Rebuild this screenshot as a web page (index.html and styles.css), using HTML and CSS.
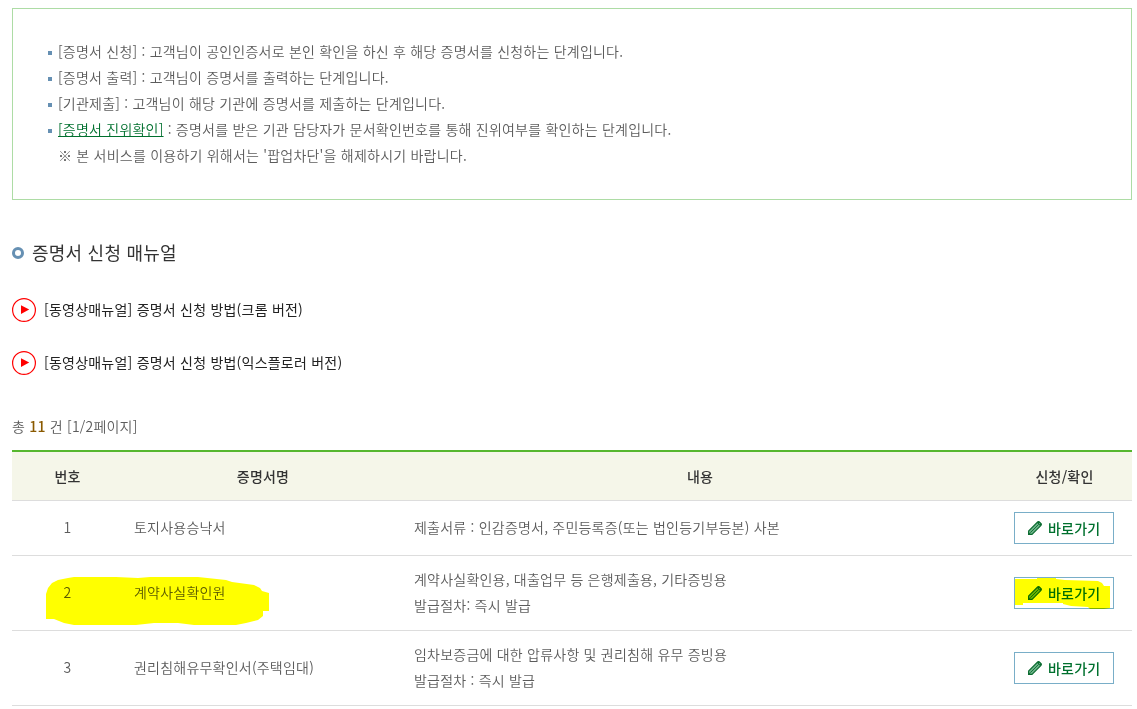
FILE: index.html
```html
<!DOCTYPE html>
<html lang="ko">
<head>
    <meta charset="UTF-8">
    <meta name="viewport" content="width=device-width, initial-scale=1.0">
    <title>증명서 신청</title>
    <link rel="stylesheet" href="styles.css">
</head>
<body>
    <svg class="defs" width="0" height="0" aria-hidden="true">
        <symbol id="pencil" viewBox="0 0 14 14">
            <path d="M.6 13.4V10L9.6 1Q10.4.3 11.3 1L13 2.7Q13.7 3.6 13 4.4L4 13.4Z" fill="#6db389" stroke="#0b6b30" stroke-width="1.1"/>
            <path d="M2.3 11.7L10.6 3.4" fill="none" stroke="#0b6b30" stroke-width=".9"/>
            <path d="M8.9 1.7L12.3 5.1L13.4 4V2.8L11.2.6H10Z" fill="#0b6b30"/>
            <circle cx="11.6" cy="2.6" r=".6" fill="#6db389"/>
            <path d="M0 14V10.6L3.4 14Z" fill="#0b6b30"/>
        </symbol>
        <symbol id="play" viewBox="0 0 24 24">
            <circle cx="12" cy="12" r="11.4" fill="none" stroke="#f00" stroke-width="1.2"/>
            <path d="M9 7.2L17.2 11.6L9 16Z" fill="#f00"/>
        </symbol>
    </svg>

    <div class="content">
        <div class="info-box">
            <ul class="info-list">
                <li>[증명서 신청] : 고객님이 공인인증서로 본인 확인을 하신 후 해당 증명서를 신청하는 단계입니다.</li>
                <li>[증명서 출력] : 고객님이 증명서를 출력하는 단계입니다.</li>
                <li>[기관제출] : 고객님이 해당 기관에 증명서를 제출하는 단계입니다.</li>
                <li><a href="#">[증명서 진위확인]</a> : 증명서를 받은 기관 담당자가 문서확인번호를 통해 진위여부를 확인하는 단계입니다.</li>
                <li class="note">※ 본 서비스를 이용하기 위해서는 '팝업차단'을 해제하시기 바랍니다.</li>
            </ul>
        </div>

        <h3 class="title">증명서 신청 매뉴얼</h3>

        <a class="manual" href="#">
            <svg class="play"><use href="#play"/></svg>
            <span>[동영상매뉴얼] 증명서 신청 방법(크롬 버전)</span>
        </a>
        <a class="manual" href="#">
            <svg class="play"><use href="#play"/></svg>
            <span>[동영상매뉴얼] 증명서 신청 방법(익스플로러 버전)</span>
        </a>

        <p class="total">총 <strong>11</strong> 건 [1/2페이지]</p>

        <table class="list">
            <colgroup>
                <col class="col-no">
                <col class="col-name">
                <col class="col-desc">
                <col class="col-link">
            </colgroup>
            <thead>
                <tr>
                    <th>번호</th>
                    <th>증명서명</th>
                    <th>내용</th>
                    <th>신청/확인</th>
                </tr>
            </thead>
            <tbody>
                <tr class="single">
                    <td class="center">1</td>
                    <td>토지사용승낙서</td>
                    <td>제출서류 : 인감증명서, 주민등록증(또는 법인등기부등본) 사본</td>
                    <td class="link"><a class="btn" href="#"><svg class="pencil"><use href="#pencil"/></svg><span>바로가기</span></a></td>
                </tr>
                <tr>
                    <td class="center marked">2
                        <svg class="marker marker-name" viewBox="0 0 224 50">
                            <path d="M0 18L2 12L6 7L12 4L22 2L28 1H70L92 2L104 1H152L180 4L186 6L208 9L214 12L216 15L223 17V35H217V40L212 44L200 47L190 49H148L132 47H108L90 49H28L18 47L8 43H0Z" fill="#ff0"/>
                        </svg>
                    </td>
                    <td>계약사실확인원</td>
                    <td>계약사실확인용, 대출업무 등 은행제출용, 기타증빙용<br>발급절차: 즉시 발급</td>
                    <td class="link marked"><a class="btn" href="#"><svg class="pencil"><use href="#pencil"/></svg><span>바로가기</span></a>
                        <svg class="marker marker-btn" viewBox="0 0 96 33">
                            <path d="M0 2H22V1H41V2L50 3L83 4L87 6L89 9H95V31L89 32H75L73 30L56 29L48 27V26H8V28H0Z" fill="#ff0"/>
                        </svg>
                    </td>
                </tr>
                <tr>
                    <td class="center">3</td>
                    <td>권리침해유무확인서(주택임대)</td>
                    <td>임차보증금에 대한 압류사항 및 권리침해 유무 증빙용<br>발급절차 : 즉시 발급</td>
                    <td class="link"><a class="btn" href="#"><svg class="pencil"><use href="#pencil"/></svg><span>바로가기</span></a></td>
                </tr>
            </tbody>
        </table>
    </div>
</body>
</html>
```
FILE: styles.css
```css
*,
*::before {
    box-sizing: border-box;
}

body {
    margin: 0;
    background: #fff;
    color: #5c5c5c;
    font-family: "Noto Sans CJK KR", sans-serif;
    font-size: 14px;
    font-weight: 350;
    line-height: 26px;
    letter-spacing: 0.22px;
    overflow: hidden;
}

a {
    color: inherit;
    text-decoration: none;
}

.defs {
    display: block;
}

.content {
    width: 1120px;
    margin: 8px 0 0 12px;
}

.info-box {
    padding: 29px 35px 31px;
    border: 1px solid #addca5;
}

.info-list {
    margin: 0;
    padding: 0;
    list-style: none;
}

.info-list li {
    display: flex;
    align-items: center;
    white-space: pre;
}

.info-list li::before {
    content: "";
    width: 4px;
    height: 4px;
    margin: 4px 6px 0 0;
    background: #6690b3;
}

.info-list .note::before {
    background: none;
}

.info-list a {
    color: #00702e;
    text-decoration: underline;
}

.title {
    display: flex;
    align-items: center;
    gap: 8px;
    margin: 39px 0 32px;
    color: #333;
    font-size: 18px;
    font-weight: 400;
}

.title::before {
    content: "";
    width: 12px;
    height: 12px;
    margin-top: 2px;
    border: 3px solid #6690b3;
    border-radius: 50%;
}

.manual {
    display: flex;
    align-items: center;
    gap: 8px;
    height: 26px;
    margin-bottom: 27px;
    color: #222;
    font-weight: 400;
}

.manual span {
    padding-bottom: 2px;
}

.play {
    width: 24px;
    height: 24px;
}

.total {
    margin: 37px 0 11px;
}

.total strong {
    color: #8a5a00;
    font-weight: 500;
}

.list {
    width: 1120px;
    table-layout: fixed;
    border-spacing: 0;
    border-top: 2px solid #56b72f;
}

.col-no {
    width: 111px;
}

.col-name {
    width: 280px;
}

.col-desc {
    width: 594px;
}

.col-link {
    width: 135px;
}

.list th {
    height: 49px;
    padding: 0 0 1px;
    border-bottom: 1px solid #ddd;
    background: #f5f6e9;
    color: #333;
    font-weight: 500;
}

.list td {
    height: 75px;
    padding: 0 11px 2px;
    border-bottom: 1px solid #ddd;
}

.list .single td {
    height: 55px;
}

.list .center {
    padding: 0 0 2px;
    text-align: center;
}

.list .link {
    padding: 0 0 0 17px;
}

.btn {
    display: flex;
    align-items: center;
    gap: 6px;
    width: 100px;
    height: 32px;
    padding-left: 13px;
    border: 1px solid #79aec8;
    color: #00702e;
    font-weight: 500;
}

.btn span {
    padding-bottom: 1px;
}

.pencil {
    width: 14px;
    height: 14px;
}

/* highlighter strokes over the second row */
.marked {
    position: relative;
}

.marker {
    position: absolute;
    mix-blend-mode: multiply;
    pointer-events: none;
}

.marker-name {
    top: 20px;
    left: 34px;
    width: 224px;
    height: 50px;
}

.marker-btn {
    top: 21px;
    left: 18px;
    width: 96px;
    height: 33px;
}
```
